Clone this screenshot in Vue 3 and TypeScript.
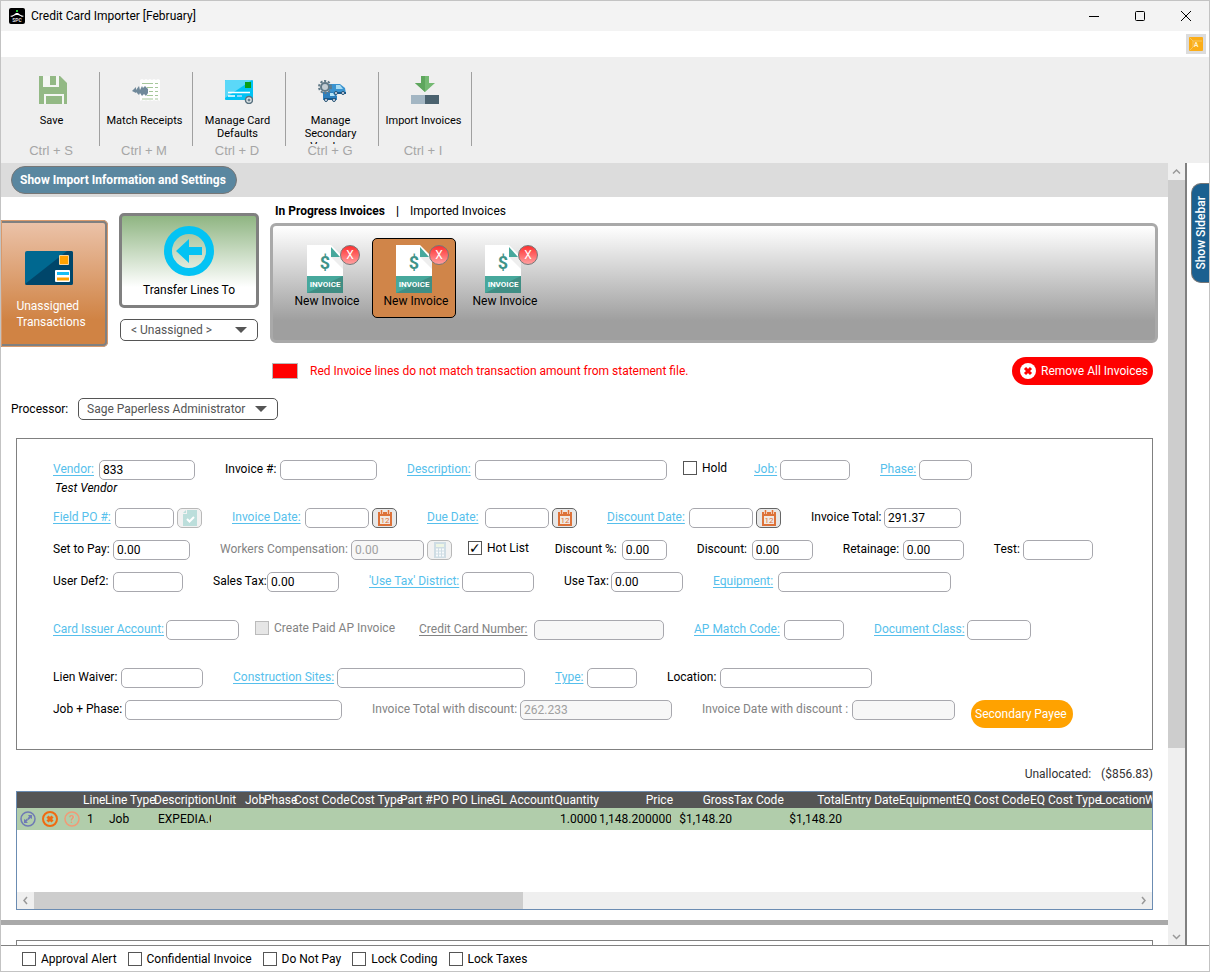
<script setup lang="ts">
import { ref } from 'vue'

type Field = {
  id: string
  kind?: 'text' | 'check'
  label: string
  labelWidth?: number
  width?: number
  value?: string
  link?: boolean
  disabled?: boolean
  button?: 'calendar' | 'calc' | 'doc'
  tight?: boolean
  checked?: boolean
}
type Row = { fields: Field[]; note?: string; apart?: boolean; payee?: boolean }

const tools = [
  { icon: 'save', label: 'Save', keys: 'Ctrl + S' },
  { icon: 'match', label: 'Match Receipts', keys: 'Ctrl + M' },
  { icon: 'card', label: 'Manage Card Defaults', keys: 'Ctrl + D' },
  { icon: 'vendor', label: 'Manage Secondary Vendors', keys: 'Ctrl + G' },
  { icon: 'import', label: 'Import Invoices', keys: 'Ctrl + I' },
]

const selected = ref(1)
const invoices = ref(['New Invoice', 'New Invoice', 'New Invoice'])

const rows = ref<Row[]>([
  {
    note: 'Test Vendor',
    fields: [
      { id: 'vendor', label: 'Vendor:', labelWidth: 46, width: 96, value: '833', link: true },
      { id: 'invno', label: 'Invoice #:', labelWidth: 55, width: 97 },
      { id: 'desc', label: 'Description:', labelWidth: 68, width: 192, link: true, tight: true },
      { id: 'hold', kind: 'check', label: 'Hold', width: 45 },
      { id: 'job', label: 'Job:', labelWidth: 26, width: 70, link: true },
      { id: 'phase', label: 'Phase:', labelWidth: 39, width: 53, link: true },
    ],
  },
  {
    fields: [
      { id: 'po', label: 'Field PO #:', labelWidth: 62, width: 59, link: true, button: 'doc' },
      { id: 'invdate', label: 'Invoice Date:', labelWidth: 73, width: 64, link: true, button: 'calendar' },
      { id: 'duedate', label: 'Due Date:', labelWidth: 58, width: 64, link: true, button: 'calendar' },
      { id: 'discdate', label: 'Discount Date:', labelWidth: 82, width: 64, link: true, button: 'calendar' },
      { id: 'total', label: 'Invoice Total:', labelWidth: 73, width: 77, value: '291.37' },
    ],
  },
  {
    fields: [
      { id: 'setpay', label: 'Set to Pay:', labelWidth: 60, width: 77, value: '0.00' },
      { id: 'workers', label: 'Workers Compensation:', labelWidth: 131, width: 73, value: '0.00', disabled: true, button: 'calc', tight: true },
      { id: 'hot', kind: 'check', label: 'Hot List', width: 61, checked: true },
      { id: 'discpct', label: 'Discount %:', labelWidth: 67, width: 45, value: '0.00' },
      { id: 'disc', label: 'Discount:', labelWidth: 55, width: 61, value: '0.00' },
      { id: 'retain', label: 'Retainage:', labelWidth: 60, width: 61, value: '0.00' },
      { id: 'test', label: 'Test:', labelWidth: 29, width: 70 },
    ],
  },
  {
    fields: [
      { id: 'def2', label: 'User Def2:', labelWidth: 60, width: 70 },
      { id: 'salestax', label: 'Sales Tax:', labelWidth: 54, width: 72, value: '0.00' },
      { id: 'district', label: "'Use Tax' District:", labelWidth: 93, width: 72, link: true },
      { id: 'usetax', label: 'Use Tax:', labelWidth: 47, width: 72, value: '0.00' },
      { id: 'equip', label: 'Equipment:', labelWidth: 65, width: 173, link: true },
    ],
  },
  {
    apart: true,
    fields: [
      { id: 'issuer', label: 'Card Issuer Account:', labelWidth: 113, width: 73, link: true, tight: true },
      { id: 'paid', kind: 'check', label: 'Create Paid AP Invoice', width: 138, disabled: true },
      { id: 'ccn', label: 'Credit Card Number:', labelWidth: 115, width: 130, link: true, disabled: true },
      { id: 'match', label: 'AP Match Code:', labelWidth: 90, width: 60, link: true },
      { id: 'docclass', label: 'Document Class:', labelWidth: 93, width: 64, link: true },
    ],
  },
  {
    apart: true,
    fields: [
      { id: 'lien', label: 'Lien Waiver:', labelWidth: 68, width: 82 },
      { id: 'sites', label: 'Construction Sites:', labelWidth: 104, width: 188, link: true },
      { id: 'type', label: 'Type:', labelWidth: 32, width: 50, link: true },
      { id: 'location', label: 'Location:', labelWidth: 53, width: 152 },
    ],
  },
  {
    payee: true,
    fields: [
      { id: 'jobphase', label: 'Job + Phase:', labelWidth: 72, width: 217 },
      { id: 'totaldisc', label: 'Invoice Total with discount:', labelWidth: 148, width: 152, value: '262.233', disabled: true },
      { id: 'datedisc', label: 'Invoice Date with discount :', labelWidth: 150, width: 103, disabled: true, tight: true },
    ],
  },
])

const columns: { title: string; width: number; value?: string; end?: boolean }[] = [
  { title: 'Line', width: 22, value: '1' },
  { title: 'Line Type', width: 49, value: 'Job' },
  { title: 'Description', width: 61, value: 'EXPEDIA.COM' },
  { title: 'Unit', width: 30 },
  { title: 'Job', width: 19 },
  { title: 'Phase', width: 30 },
  { title: 'Cost Code', width: 56 },
  { title: 'Cost Type', width: 50 },
  { title: 'Part #', width: 33 },
  { title: 'PO', width: 19 },
  { title: 'PO Line', width: 40 },
  { title: 'GL Account', width: 61 },
  { title: 'Quantity', width: 46, value: '1.0000', end: true },
  { title: 'Price', width: 74, value: '1,148.200000', end: true },
  { title: 'Gross', width: 61, value: '$1,148.20', end: true },
  { title: 'Tax Code', width: 48 },
  { title: 'Total', width: 62, value: '$1,148.20', end: true },
  { title: 'Entry Date', width: 55 },
  { title: 'Equipment', width: 57 },
  { title: 'EQ Cost Code', width: 74 },
  { title: 'EQ Cost Type', width: 69 },
  { title: 'Location', width: 46 },
  { title: 'Warehouse', width: 70 },
]

const flags = ['Approval Alert', 'Confidential Invoice', 'Do Not Pay', 'Lock Coding', 'Lock Taxes']
</script>

<template>
  <div class="window">
    <header class="titlebar">
      <svg class="app-icon" width="16" height="16" viewBox="0 0 16 16">
        <rect width="16" height="16" rx="2" fill="#000" />
        <path d="M1 8C4 7.500 6 6 7 5H9C10 6 12 7.500 15 8L13 9C11 7.500 9.500 7 8 7C6.500 7 5 7.500 3 9Z" fill="#fff" />
        <rect x="7" y="2" width="2" height="2" fill="#2c3" />
        <text x="8" y="13.500" font-size="5" font-weight="bold" text-anchor="middle" fill="#ddd">SPC</text>
      </svg>
      <h1>Credit Card Importer [February]</h1>
      <div class="win-buttons">
        <button aria-label="Minimize"><svg width="12" height="12" viewBox="0 0 12 12"><path d="M1 6.500H11" stroke="#000" /></svg></button>
        <button aria-label="Maximize"><svg width="12" height="12" viewBox="0 0 12 12"><rect x="1.500" y="1.500" width="9" height="9" rx="1" fill="none" stroke="#000" /></svg></button>
        <button aria-label="Close"><svg width="12" height="12" viewBox="0 0 12 12"><path d="M1 1L11 11M11 1L1 11" stroke="#000" /></svg></button>
      </div>
    </header>

    <div class="menubar">
      <button class="alert" aria-label="Alerts">
        <svg width="14" height="14" viewBox="0 0 14 14">
          <rect width="14" height="14" rx="1" fill="#fbad18" />
          <path d="M1 1L4 4H13M4 4V10L1 13" fill="none" stroke="#f8cf74" stroke-width=".8" />
          <text x="7" y="10" font-size="7" font-weight="bold" text-anchor="middle" fill="#fff2d0">A</text>
        </svg>
      </button>
    </div>

    <nav class="toolbar">
      <button v-for="t in tools" :key="t.icon" class="tool">
        <span class="tool-body">
          <svg v-if="t.icon === 'save'" width="28" height="28" viewBox="0 0 28 28">
            <path d="M0 0H21L28 7V28H0Z" fill="#93b985" />
            <path d="M4 0H20V11H4Z M5 28V18H25V28H23V20H7V28Z" fill="#f4f6f3" />
            <rect x="11" y="0" width="6" height="9" fill="#93b985" />
          </svg>
          <svg v-else-if="t.icon === 'match'" width="28" height="28" viewBox="0 0 28 28">
            <path d="M8 4L10 3L12 4L14 3L16 4L18 3L20 4L22 3L24 4L26 3L28 4V25L26 24L24 25L22 24L20 25L18 24L16 25L14 24L12 25L10 24L8 25Z" fill="#fff" />
            <path d="M10 7.500H21M23 7.500H26M15 11.500H21M23 11.500H26M17 15.500H21M23 15.500H26M15 19.500H21M23 19.500H26M10 23H21M23 23H26" stroke="#a6c79b" />
            <path d="M0 15L4 11V14L7 10L8 14L10 10L11 12L13 10L16 13V17L14 20L12 18L10 20L8 17L7 19L4 16V17Z" fill="#70899a" />
          </svg>
          <svg v-else-if="t.icon === 'card'" width="28" height="28" viewBox="0 0 28 28">
            <rect x="0" y="4" width="28" height="20" rx="1" fill="#00c3f5" />
            <path d="M1 4H27L0 22V5Z" fill="#5bd8f8" />
            <rect x="20" y="6" width="6" height="6" fill="#0a9d18" />
            <path d="M3 16.500H25M3 20H10" stroke="#fff" stroke-width="1.500" />
            <path d="M12 20H17" stroke="#bdf" stroke-width="1.500" />
            <circle cx="24" cy="24" r="3.500" fill="#dfe7ea" stroke="#58707e" stroke-width="1.500" />
            <circle cx="24" cy="24" r="1" fill="#8ca0ab" stroke="#58707e" />
          </svg>
          <svg v-else-if="t.icon === 'vendor'" width="28" height="28" viewBox="0 0 28 28">
            <path d="M11 8H22L27 12L28 18H11Z" fill="#3a93d0" />
            <path d="M18 9H22L25 13H18Z" fill="#a9dcf2" />
            <path d="M5 16H15L19 20V24H5Z" fill="#2d7fbd" />
            <path d="M12 17H15L17 20H12Z" fill="#b5e4f7" />
            <path d="M19 17H28M6 23H18" stroke="#145a91" stroke-width="2" />
            <g fill="#eef" stroke="#24516f"><circle cx="18" cy="17" r="1.500" /><circle cx="25" cy="17" r="1.500" /><circle cx="8" cy="24" r="1.500" /><circle cx="16" cy="24" r="1.500" /></g>
            <circle cx="7" cy="11" r="6" fill="none" stroke="#617987" stroke-width="2" stroke-dasharray="2.200 1.600" />
            <circle cx="7" cy="11" r="4" fill="#c4ced4" stroke="#617987" stroke-width="2" />
          </svg>
          <svg v-else width="28" height="28" viewBox="0 0 28 28">
            <path d="M10 0H18V7H24L14 16L4 7H10Z" fill="#74b972" />
            <path d="M10 0H14V16L4 7H10Z" fill="#5ea65d" />
            <rect y="19" width="14" height="9" fill="#a3b6c3" />
            <rect x="14" y="19" width="14" height="9" fill="#4b626f" />
          </svg>
          <span class="tool-label">{{ t.label }}</span>
        </span>
        <span class="tool-keys">{{ t.keys }}</span>
      </button>
    </nav>

    <div class="body">
      <main class="content">
        <div class="infobar"><button class="show-info">Show Import Information and Settings</button></div>

        <section class="top">
          <button class="unassigned">
            <svg width="48" height="34" viewBox="0 0 48 34">
              <rect width="48" height="34" rx="2" fill="#006890" />
              <path d="M46 0Q48 0 48 2V32Q48 34 46 34H2Q1 34 0 33L42 0Z" fill="#00466a" />
              <rect x="34" y="4" width="10" height="10" rx="1" fill="#fdd496" /><rect x="35" y="5" width="8" height="8" fill="#ffa200" />
              <rect x="30" y="19" width="15" height="12" rx="1" fill="#fff" />
              <path d="M32 22.500H44" stroke="#18bdf3" stroke-width="3" /><path d="M32 28H44" stroke="#ffa200" stroke-width="3" />
            </svg>
            <span>Unassigned<br />Transactions</span>
          </button>

          <div class="transfer">
            <button class="transfer-btn">
              <svg width="50" height="50" viewBox="0 0 50 50">
                <circle cx="25" cy="25" r="21" fill="none" stroke="#03c3f4" stroke-width="8" />
                <path d="M12 25L25 13V21H38V29H25V37Z" fill="#03c3f4" />
              </svg>
              <span>Transfer Lines To</span>
            </button>
            <div class="combo">
              <select aria-label="Transfer target"><option>&lt; Unassigned &gt;</option></select>
              <svg width="12" height="6" viewBox="0 0 12 6"><path d="M0 0H12L6 6Z" fill="#555" /></svg>
            </div>
          </div>

          <div class="invoices">
            <div class="tabs">
              <button class="tab active">In Progress Invoices</button><span class="bar">|</span><button class="tab">Imported Invoices</button>
            </div>
            <div class="tray">
              <div v-for="(inv, i) in invoices" :key="i" class="invoice" :class="{ selected: selected === i }" @click="selected = i">
                <svg width="36" height="48" viewBox="0 0 36 48">
                  <path d="M0 0H24L36 12V48H0Z" fill="#fff" />
                  <path d="M24 12H36V24Z" fill="#eee" />
                  <path d="M24 2L33 12H24Z" fill="#47a89c" />
                  <rect y="31" width="36" height="17" fill="#47a89c" />
                  <path d="M36 31V48H0Z" fill="#408e84" />
                  <text x="18" y="24" font-size="18" font-weight="bold" text-anchor="middle" fill="#3f9389">$</text>
                  <text x="18" y="42" font-size="8" font-weight="bold" text-anchor="middle" fill="#fff">INVOICE</text>
                </svg>
                <button class="remove" aria-label="Remove invoice">X</button>
                <span class="invoice-name">{{ inv }}</span>
              </div>
            </div>
          </div>
        </section>

        <div class="legend">
          <i class="swatch"></i>
          <span>Red Invoice lines do not match transaction amount from statement file.</span>
          <button class="remove-all">
            <svg width="16" height="16" viewBox="0 0 16 16"><circle cx="8" cy="8" r="8" fill="#fff" /><path d="M5 5L11 11M11 5L5 11" stroke="#f00" stroke-width="3" /></svg>
            Remove All Invoices
          </button>
        </div>

        <div class="processor">
          <label for="processor">Processor:</label>
          <div class="combo wide">
            <select id="processor"><option>Sage Paperless Administrator</option></select>
            <svg width="12" height="6" viewBox="0 0 12 6"><path d="M0 0H12L6 6Z" fill="#555" /></svg>
          </div>
        </div>

        <form class="panel" @submit.prevent>
          <template v-for="(row, r) in rows" :key="r">
            <div class="row" :class="{ apart: row.apart }">
              <template v-for="f in row.fields" :key="f.id">
                <label v-if="f.kind === 'check'" class="check" :class="{ disabled: f.disabled }" :style="{ width: f.width + 'px' }">
                  <input v-model="f.checked" type="checkbox" :disabled="f.disabled" />{{ f.label }}
                </label>
                <div v-else class="field" :class="{ tight: f.tight, disabled: f.disabled }">
                  <label :for="f.id" :style="{ width: f.labelWidth + 'px' }"><a v-if="f.link" href="#">{{ f.label }}</a><template v-else>{{ f.label }}</template></label>
                  <input :id="f.id" v-model="f.value" type="text" :disabled="f.disabled" :style="{ width: f.width + 'px' }" />
                  <button v-if="f.button" type="button" class="mini" :class="f.button" :aria-label="f.label + ' lookup'">
                    <svg v-if="f.button === 'calendar'" width="16" height="16" viewBox="0 0 16 16">
                      <path d="M1 2H15V16H1Z" fill="#dd7239" />
                      <rect x="3" y="6" width="10" height="8" fill="#f0e9e4" />
                      <path d="M4.500 0V4M11.500 0V4" stroke="#fbe3d5" stroke-width="3" /><path d="M4.500 0V4M11.500 0V4" stroke="#dd7239" stroke-width="1.500" />
                      <text x="8" y="13" font-size="8" text-anchor="middle" fill="#dd7239">12</text>
                    </svg>
                    <svg v-else-if="f.button === 'doc'" width="14" height="16" viewBox="0 0 14 16">
                      <path d="M4 0H14V16H0V4H4Z" fill="#bcdedb" /><path d="M3 0V3H0Z" fill="#bcdedb" />
                      <path d="M4 9L6.500 11.500L11 7" fill="none" stroke="#fff" stroke-width="2" />
                    </svg>
                    <svg v-else width="12" height="16" viewBox="0 0 12 16">
                      <rect width="12" height="16" fill="#cfdde4" /><rect x="2" y="2" width="8" height="3" fill="#edf5e4" />
                      <path d="M2 7.500H10M2 10.500H10M2 13.500H10" stroke="#f7fafb" stroke-width="2" stroke-dasharray="2 1" />
                    </svg>
                  </button>
                </div>
              </template>
              <button v-if="row.payee" type="button" class="payee">Secondary Payee</button>
            </div>
            <div v-if="row.note" class="note">{{ row.note }}</div>
          </template>
        </form>

        <div class="unallocated"><span>Unallocated:</span><span>($856.83)</span></div>

        <div class="grid">
          <div class="grid-view">
            <table>
              <colgroup><col class="actions-col" /><col v-for="c in columns" :key="c.title" :style="{ width: c.width + 'px' }" /></colgroup>
              <thead>
                <tr><th></th><th v-for="c in columns" :key="c.title" :class="{ end: c.end }">{{ c.title }}</th></tr>
              </thead>
              <tbody>
                <tr>
                  <td class="actions">
                    <button aria-label="Refresh line">
                      <svg width="16" height="16" viewBox="0 0 16 16"><circle cx="8" cy="8" r="7" fill="none" stroke="#6f7ab5" stroke-width="1.500" /><path d="M8 4H12V8L10.500 7L8.500 9L7.500 7.500L9 5.500Z M8 12H4V8L5.500 9L7 7.500L8 9L6.500 10.500Z" fill="#6f7ab5" /></svg>
                    </button>
                    <button aria-label="Delete line">
                      <svg width="16" height="16" viewBox="0 0 16 16"><circle cx="8" cy="8" r="7" fill="none" stroke="#f06a10" stroke-width="2" /><path d="M5.500 5.500L10.500 10.500M10.500 5.500L5.500 10.500" stroke="#f06a10" stroke-width="3" /></svg>
                    </button>
                    <button aria-label="Line help">
                      <svg width="16" height="16" viewBox="0 0 16 16"><circle cx="8" cy="8" r="7" fill="none" stroke="#f29a76" stroke-width="1.500" /><text x="8" y="12" font-size="11" text-anchor="middle" fill="#f29a76" font-weight="bold">?</text></svg>
                    </button>
                  </td>
                  <td v-for="c in columns" :key="c.title" :class="{ end: c.end }"><span class="cell">{{ c.value }}</span></td>
                </tr>
              </tbody>
            </table>
          </div>
          <div class="hscroll">
            <svg width="17" height="17" viewBox="0 0 17 17"><path d="M10 5L7 8.500L10 12" fill="none" stroke="#999" stroke-width="1.500" /></svg>
            <div class="track"><div class="thumb"></div></div>
            <svg width="17" height="17" viewBox="0 0 17 17"><path d="M7 5L10 8.500L7 12" fill="none" stroke="#999" stroke-width="1.500" /></svg>
          </div>
        </div>

        <div class="splitter"></div>
        <div class="next-panel"></div>
      </main>

      <div class="vscroll">
        <svg width="17" height="17" viewBox="0 0 17 17"><path d="M5 10.500L8.500 7L12 10.500" fill="none" stroke="#999" stroke-width="1.500" /></svg>
        <div class="track"><div class="thumb"></div></div>
        <svg width="17" height="17" viewBox="0 0 17 17"><path d="M5 7L8.500 10.500L12 7" fill="none" stroke="#999" stroke-width="1.500" /></svg>
      </div>
      <aside class="side"><button>Show Sidebar</button></aside>
    </div>

    <footer class="flags">
      <label v-for="f in flags" :key="f" class="check"><input type="checkbox" />{{ f }}</label>
    </footer>
  </div>
</template>

<style>
html,
body {
  margin: 0;
  background: #fff;
}
</style>

<style scoped>
.window {
  box-sizing: border-box;
  display: flex;
  flex-direction: column;
  height: 100vh;
  border: 1px solid #c3c3c3;
  background: #fff;
  color: #000;
  font: 12px/16px Roboto, "Open Sans", sans-serif;
  white-space: nowrap;
  overflow: hidden;
}
button,
input,
select {
  box-sizing: border-box;
  margin: 0;
  padding: 0;
  font: inherit;
  color: inherit;
}
button {
  border: 0;
  background: none;
}
svg {
  display: block;
  flex: none;
}
.titlebar {
  display: flex;
  align-items: center;
  flex: none;
  height: 30px;
  background: #f3f3f3;
}
.app-icon {
  margin: 0 6px 0 8px;
}
h1 {
  margin: 0;
  flex: 1;
  font-size: 12px;
  font-weight: 400;
}
.win-buttons {
  display: flex;
}
.win-buttons button {
  display: flex;
  justify-content: center;
  width: 46px;
}
.menubar {
  display: flex;
  justify-content: flex-end;
  align-items: center;
  flex: none;
  height: 26px;
  padding-right: 3px;
}
.alert {
  padding: 3px;
  background: #dcdcdc;
}
.toolbar {
  box-sizing: border-box;
  display: flex;
  flex: none;
  height: 106px;
  padding: 15px 0 0 5px;
  background: #efefef;
  font-size: 11px;
}
.tool {
  display: flex;
  flex-direction: column;
  width: 93px;
}
.tool-body {
  box-sizing: border-box;
  display: flex;
  flex-direction: column;
  align-items: center;
  width: 94px;
  height: 74px;
  padding: 4px 2px 0 0;
  border-right: 1px solid #a0a0a0;
}
.tool-body svg {
  margin-left: 2px;
}
.tool-label {
  width: 80px;
  height: 30px;
  margin-top: 10px;
  overflow: hidden;
  line-height: 13px;
  white-space: normal;
}
.tool-keys {
  width: 90px;
  margin-top: -3px;
  color: #a6a6a6;
  font: 13px/16px "Liberation Sans", sans-serif;
}
.body {
  display: flex;
  flex: 1;
  min-height: 0;
}
.content {
  flex: 1;
  min-width: 0;
  overflow: hidden;
}
.infobar {
  box-sizing: border-box;
  height: 34px;
  padding: 3px 10px;
  background: #dcdcdc;
}
.show-info {
  height: 28px;
  padding: 0 10px 0 8px;
  border: 1px solid #777;
  border-radius: 14px;
  background: #5a87a0;
  color: #fff;
  font-weight: 700;
}
.top {
  display: flex;
  align-items: flex-start;
  padding-right: 10px;
}
.unassigned {
  display: flex;
  flex-direction: column;
  align-items: center;
  gap: 13px;
  width: 107px;
  height: 127px;
  margin-top: 23px;
  padding: 28px 4px 0 0;
  border: 3px solid #808080;
  border-left: 0;
  border-radius: 0 5px 5px 0;
  outline: 1px solid #d99a6c;
  outline-offset: -1px;
  background: linear-gradient(#ebc2a8, #d08344 80%);
  color: #fff;
  text-align: left;
}
.unassigned svg {
  margin-right: 4px;
}
.transfer {
  display: flex;
  flex-direction: column;
  gap: 11px;
  margin: 16px 11px 0;
}
.transfer-btn {
  display: flex;
  flex-direction: column;
  align-items: center;
  gap: 6px;
  width: 140px;
  height: 95px;
  padding-top: 10px;
  border: 3px solid #808080;
  border-radius: 5px;
  background: linear-gradient(#8fb582, #fff 80%);
}
.combo {
  position: relative;
  width: 138px;
  margin: 0 1px;
  color: #555;
}
.combo.wide {
  width: 200px;
  margin: 0;
}
.combo select {
  width: 100%;
  height: 22px;
  padding: 0 24px 0 10px;
  border: 1px solid #555;
  border-radius: 5px;
  background: #fff;
  appearance: none;
}
.combo.wide select {
  padding-left: 8px;
}
.combo svg {
  position: absolute;
  top: 8px;
  right: 11px;
  pointer-events: none;
}
.invoices {
  flex: 1;
  min-width: 0;
}
.tabs {
  display: flex;
  gap: 11px;
  height: 16px;
  padding: 6px 0 4px 5px;
}
.active,
.bar {
  font-weight: 700;
}
.tray {
  box-sizing: border-box;
  display: flex;
  gap: 5px;
  height: 120px;
  padding: 12px 10px;
  border: 3px solid #a9a9a9;
  border-radius: 6px;
  background: linear-gradient(#fff, #9f9f9f 83%);
}
.invoice {
  box-sizing: border-box;
  position: relative;
  display: flex;
  flex-direction: column;
  align-items: center;
  width: 84px;
  height: 80px;
  padding: 6px 0 0 4px;
  border: 1px solid transparent;
  border-radius: 5px;
}
.invoice.selected {
  border-color: #000;
  background: #d08549;
}
.invoice svg {
  margin-right: 4px;
}
.remove {
  position: absolute;
  top: 6px;
  right: 6px;
  width: 20px;
  height: 20px;
  border: 1px solid #777;
  border-radius: 50%;
  background: linear-gradient(#ff3030, #ffa0a0);
  color: #fff;
  line-height: 18px;
}
.legend {
  display: flex;
  align-items: center;
  height: 28px;
  margin: 10px 15px 0 271px;
  color: #f00;
}
.swatch {
  box-sizing: border-box;
  width: 26px;
  height: 16px;
  margin-right: 12px;
  border: 1px solid #b9b9b9;
  background: #f00;
}
.remove-all {
  display: flex;
  align-items: center;
  gap: 5px;
  height: 28px;
  margin-left: auto;
  padding: 0 5px 0 8px;
  border-radius: 14px;
  background: #f00;
  color: #fff;
}
.processor {
  display: flex;
  align-items: center;
  margin: 13px 0 0 10px;
}
.processor label {
  width: 67px;
}
.panel {
  margin: 18px 15px 0;
  padding: 21px 36px 21px;
  border: 1px solid #808080;
}
.row {
  display: flex;
  align-items: flex-start;
  margin-top: 12px;
}
.row:first-child {
  margin-top: 0;
}
.row.apart {
  margin-top: 28px;
}
.note {
  padding-left: 2px;
  font-style: italic;
}
.field {
  display: flex;
  height: 20px;
  margin-right: 30px;
}
.field.tight {
  margin-right: 16px;
}
.field label {
  line-height: 18px;
}
.disabled,
.disabled a {
  color: #838383;
}
a {
  color: #56bfec;
  text-decoration: underline;
  text-underline-offset: 2px;
}
.field input {
  height: 20px;
  padding: 0 3px;
  border: 1px solid #a8a8ae;
  border-radius: 5px;
  background: #fff;
}
.field input:disabled {
  background: #f7f7f7;
  color: #a0a0a0;
}
.mini {
  display: flex;
  align-items: center;
  justify-content: center;
  width: 25px;
  height: 20px;
  margin-left: 3px;
  border: 1px solid #b8b8b8;
  border-radius: 5px;
  background: #f2f2f2;
}
.mini.calendar {
  border-color: #666;
  background: #e8e8e8;
}
.check {
  display: flex;
  gap: 5px;
  line-height: 16px;
}
.row .check {
  margin-right: 26px;
}
.check input {
  appearance: none;
  flex: none;
  width: 14px;
  height: 14px;
  margin-top: 1px;
  border: 1px solid #555;
  background: #fff;
}
.check input:checked::after {
  content: "✓";
  display: block;
  color: #000;
  font: 700 14px/12px "DejaVu Sans", sans-serif;
}
.check input:disabled {
  border-color: #bbb;
  background: #e6e6e6;
}
.payee {
  height: 28px;
  padding: 0 6px 0 4px;
  border-radius: 14px;
  background: #ffa200;
  color: #fff;
}
.unallocated {
  display: flex;
  justify-content: flex-end;
  gap: 10px;
  margin: 16px 15px 9px;
  color: #333;
}
.grid {
  margin: 0 15px;
  border: 1px solid #6b8cb2;
}
.grid-view {
  height: 100px;
  overflow: hidden;
}
table {
  table-layout: fixed;
  width: 1198px;
  border-collapse: collapse;
}
.actions-col {
  width: 66px;
}
th {
  height: 16px;
  padding: 0;
  background: #555;
  color: #fff;
  font-weight: 400;
  line-height: 16px;
  text-align: left;
}
td {
  height: 22px;
  padding: 0 4px;
  background: #b1cdab;
  line-height: 20px;
}
.cell {
  display: block;
  overflow: hidden;
}
.end {
  text-align: right;
}
td.end {
  padding: 0 2px 0 0;
}
.actions {
  padding: 0 3px;
}
.actions button {
  float: left;
  margin-right: 6px;
}
.actions button:last-child {
  margin-right: 0;
}
.hscroll {
  display: flex;
  background: #efefef;
}
.hscroll .track {
  flex: 1;
}
.hscroll .thumb {
  width: 44.4%;
  height: 17px;
  background: #cdcdcd;
}
.splitter {
  height: 5px;
  margin-top: 10px;
  background: #a9a9a9;
}
.next-panel {
  height: 60px;
  margin: 15px 15px 0;
  border: 1px solid #808080;
}
.vscroll {
  display: flex;
  flex-direction: column;
  flex: none;
  background: #efefef;
  border-right: 2px solid #808080;
}
.vscroll .track {
  flex: 1;
}
.vscroll .thumb {
  width: 17px;
  height: 76%;
  background: #cdcdcd;
}
.side {
  display: flex;
  justify-content: flex-end;
  align-items: flex-start;
  width: 22px;
  padding-top: 20px;
}
.side button {
  width: 18px;
  height: 100px;
  border: 1px solid #777;
  border-right: 0;
  border-radius: 10px 0 0 10px;
  background: #1b6090;
  color: #fff;
  font-weight: 500;
  writing-mode: sideways-lr;
}
.flags {
  display: flex;
  align-items: center;
  flex: none;
  gap: 11px;
  height: 25px;
  padding-left: 21px;
  border-top: 1px solid #808080;
}
</style>
